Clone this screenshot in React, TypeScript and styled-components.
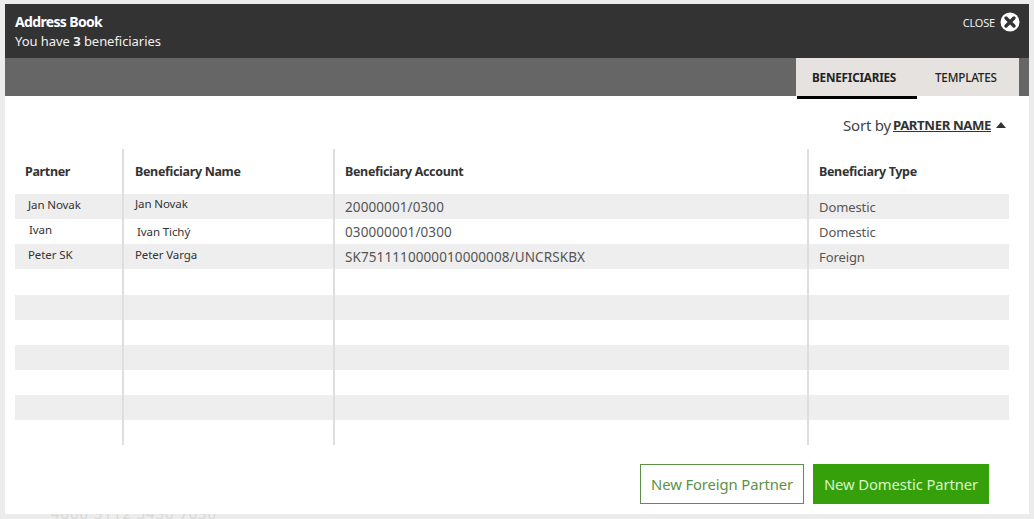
import { createGlobalStyle, styled } from "styled-components";

const GlobalStyle = createGlobalStyle`
  html, body {
    margin: 0;
    padding: 0;
    background: #ececec;
    font-family: "Noto Sans", "Open Sans", sans-serif;
  }
`;

const Page = styled.div`
  width: 1034px;
  height: 519px;
  padding: 4px 5px 0;
  box-sizing: border-box;
  overflow: hidden;
`;

const Dialog = styled.div`
  width: 1024px;
  height: 510px;
  background: #fff;
  display: flex;
  flex-direction: column;
`;

const Backdrop = styled.div`
  height: 5px;
  overflow: hidden;
  padding-left: 46px;
  font-size: 15px;
  line-height: 14px;
  letter-spacing: 0.9px;
  color: #d8d8d8;
  white-space: nowrap;
`;

const BackdropText = styled.div`
  margin-top: -8px;
`;

const Header = styled.div`
  height: 54px;
  background: #333;
  color: #fff;
  display: flex;
  justify-content: space-between;
  padding: 8px 9px 0 10px;
  box-sizing: border-box;
`;

const Title = styled.div`
  font-size: 14px;
  line-height: 20px;
  font-weight: 700;
  letter-spacing: -0.65px;
`;

const Subtitle = styled.div`
  font-size: 13px;
  line-height: 19px;
  letter-spacing: -0.05px;
  color: #f0f0f0;
`;

const Close = styled.div`
  display: flex;
  align-items: center;
  gap: 5px;
  height: 20px;
  font-size: 11px;
  letter-spacing: -0.2px;
  color: #eee;
`;

const TabBar = styled.div`
  height: 38px;
  background: #666;
  display: flex;
  justify-content: flex-end;
  padding-right: 10px;
`;

const Tabs = styled.div`
  width: 223px;
  background: #e5e2e0;
  display: flex;
`;

const Tab = styled.div<{ $active?: boolean }>`
  width: ${(p) => (p.$active ? "120px" : "102px")};
  margin-left: ${(p) => (p.$active ? "1px" : "0")};
  height: 41px;
  box-sizing: border-box;
  padding: 11px 0 0 ${(p) => (p.$active ? "15px" : "18px")};
  font-size: 11.7px;
  line-height: 16px;
  font-weight: ${(p) => (p.$active ? 700 : 500)};
  letter-spacing: -0.2px;
  color: #222;
  border-bottom: ${(p) => (p.$active ? "3px solid #000" : "0")};
`;

const SortRow = styled.div`
  display: flex;
  justify-content: flex-end;
  align-items: center;
  height: 22px;
  margin-top: 18px;
  padding-right: 23px;
  color: #444;
  font-size: 15px;
  letter-spacing: -0.2px;
`;

const SortKey = styled.span`
  margin-left: 2px;
  font-size: 13.2px;
  font-weight: 700;
  letter-spacing: -0.4px;
  text-decoration: underline;
  color: #333;
`;

const Caret = styled.span`
  margin-left: 5px;
  width: 0;
  height: 0;
  border-left: 5px solid transparent;
  border-right: 5px solid transparent;
  border-bottom: 6px solid #333;
`;

const Table = styled.div`
  margin: 13px 20px 0 10px;
`;

const Row = styled.div<{ $shaded?: boolean; $height: number }>`
  display: grid;
  grid-template-columns: 107px 211px 474px 202px;
  height: ${(p) => p.$height}px;
  background: ${(p) => (p.$shaded ? "#eee" : "transparent")};
`;

const Cell = styled.div<{ $first?: boolean; $x?: number; $y?: number }>`
  box-sizing: border-box;
  border-left: ${(p) => (p.$first ? "0" : "2px solid #dedede")};
  padding-left: ${(p) => p.$x ?? 10}px;
  padding-top: ${(p) => p.$y ?? 0}px;
  white-space: nowrap;
  line-height: 18px;
`;

const HeadCell = styled(Cell)`
  padding-top: 14px;
  font-size: 12.5px;
  font-weight: 700;
  letter-spacing: -0.33px;
  color: #333;
`;

const NameCell = styled(Cell)`
  font-size: 11.5px;
  letter-spacing: -0.1px;
  color: #333;
`;

const AccountCell = styled(Cell)`
  padding-top: 4px;
  font-size: 13.5px;
  letter-spacing: 0.1px;
  color: #555;
`;

const TypeCell = styled(Cell)`
  padding-top: 4px;
  font-size: 13px;
  letter-spacing: -0.1px;
  color: #555;
`;

const Footer = styled.div`
  display: flex;
  justify-content: flex-end;
  gap: 9px;
  margin-top: 19px;
  padding-right: 40px;
`;

const Button = styled.div<{ $primary?: boolean }>`
  height: 40px;
  box-sizing: border-box;
  display: flex;
  align-items: center;
  justify-content: center;
  width: ${(p) => (p.$primary ? "176px" : "164px")};
  font-size: 14.8px;
  letter-spacing: -0.1px;
  background: ${(p) => (p.$primary ? "#36a00a" : "#fff")};
  color: ${(p) => (p.$primary ? "#d8f5c8" : "#5d9147")};
  border: ${(p) => (p.$primary ? "0" : "1px solid #5d9147")};
`;

const rows = [
  { partner: "Jan Novak", px: 13, py: 2, name: "Jan Novak", nx: 11, ny: 1, account: "20000001/0300", type: "Domestic" },
  { partner: "Ivan", px: 14, py: 2, name: "Ivan Tichý", nx: 13, ny: 4, account: "030000001/0300", type: "Domestic" },
  { partner: "Peter SK", px: 13, py: 2, name: "Peter Varga", nx: 11, ny: 2, account: "SK7511110000010000008/UNCRSKBX", type: "Foreign" },
];

const emptyRows = [3, 4, 5, 6, 7, 8, 9];

export default function App() {
  return (
    <Page>
      <GlobalStyle />
      <Dialog>
        <Header>
          <div>
            <Title>Address Book</Title>
            <Subtitle>
              You have <b>3</b> beneficiaries
            </Subtitle>
          </div>
          <Close>
            CLOSE
            <svg width="20" height="20" viewBox="0 0 20 20">
              <circle cx="10" cy="10" r="9.5" fill="#fff" />
              <path d="M6 6l8 8M14 6l-8 8" stroke="#333" strokeWidth="3.4" strokeLinecap="round" />
            </svg>
          </Close>
        </Header>
        <TabBar>
          <Tabs>
            <Tab $active>BENEFICIARIES</Tab>
            <Tab>TEMPLATES</Tab>
          </Tabs>
        </TabBar>
        <SortRow>
          Sort by<SortKey>PARTNER NAME</SortKey>
          <Caret />
        </SortRow>
        <Table>
          <Row $height={45}>
            <HeadCell $first>Partner</HeadCell>
            <HeadCell $x={11}>Beneficiary Name</HeadCell>
            <HeadCell>Beneficiary Account</HeadCell>
            <HeadCell>Beneficiary Type</HeadCell>
          </Row>
          {rows.map((r, i) => (
            <Row key={r.partner} $height={25} $shaded={i % 2 === 0}>
              <NameCell $first $x={r.px} $y={r.py}>{r.partner}</NameCell>
              <NameCell $x={r.nx} $y={r.ny}>{r.name}</NameCell>
              <AccountCell>{r.account}</AccountCell>
              <TypeCell>{r.type}</TypeCell>
            </Row>
          ))}
          {emptyRows.map((i) => (
            <Row key={i} $height={i === 3 ? 26 : 25} $shaded={i % 2 === 0}>
              <Cell $first />
              <Cell />
              <Cell />
              <Cell />
            </Row>
          ))}
        </Table>
        <Footer>
          <Button>New Foreign Partner</Button>
          <Button $primary>New Domestic Partner</Button>
        </Footer>
      </Dialog>
      <Backdrop>
        <BackdropText>4000 3112 5430 7030</BackdropText>
      </Backdrop>
    </Page>
  );
}
